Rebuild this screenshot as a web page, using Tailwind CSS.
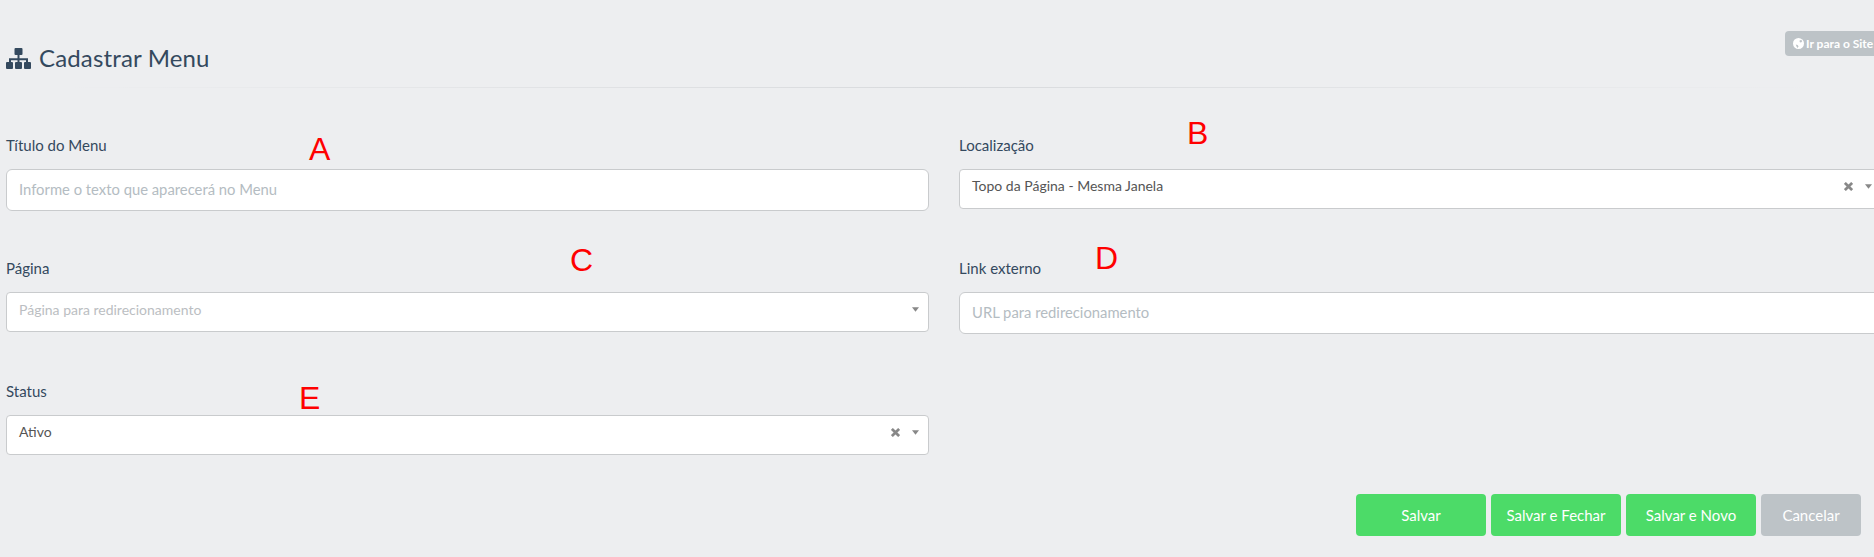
<!DOCTYPE html>
<html lang="pt-BR">
<head>
    <meta charset="UTF-8">
    <title>Cadastrar Menu</title>
    <script src="https://cdn.jsdelivr.net/npm/@tailwindcss/browser@4"></script>
</head>
<body class="bg-[#edeef0] font-['Lato',sans-serif] text-[#34495e] h-[557px] w-[1874px] overflow-hidden relative">

    <!-- header -->
    <div class="relative h-[88px] pl-[6px] pt-[44px]">
        <h1 class="flex items-center gap-[8px] text-[24px] leading-[28px] font-normal tracking-[0.15px]">
            <svg class="w-[25px] h-[21px] fill-[#34495e]" viewBox="0 0 25 21">
                <rect x="8.5" y="0" width="8" height="7" rx="1"/>
                <rect x="0" y="14" width="7" height="7" rx="1"/>
                <rect x="9" y="14" width="7" height="7" rx="1"/>
                <rect x="18" y="14" width="7" height="7" rx="1"/>
                <path d="M11.5 7h2v3.2h8.5v4.3h-2v-2.3h-6.500v2.300h-2v-2.300h-6.500v2.300h-2v-4.300h8.500z"/>
            </svg>
            Cadastrar Menu
        </h1>
        <a class="absolute left-[1785px] top-[31px] w-[100px] h-[25px] rounded-[4px] bg-[#bdc3c7] text-white text-[12px] font-bold flex items-center pl-[8px] gap-[2px]">
            <svg class="w-[11px] h-[11px] fill-white" viewBox="0 0 12 12">
                <path d="M6 0a6 6 0 1 0 0 12A6 6 0 0 0 6 0zm3 1.800 1 1.700-1.200 1.500-1.300-.5-.5-1.500zM3 7l2 .5 1 1.500-.8 2L4 9.500z" fill-rule="evenodd"/>
            </svg>
            Ir para o Site
        </a>
        <div class="absolute left-[60px] top-[87px] w-[1760px] h-px bg-linear-to-r from-transparent via-[#d8dadd] to-transparent"></div>
    </div>

    <!-- form -->
    <div class="grid grid-cols-[923px_923px] gap-x-[30px] pl-[6px] pt-[47px]">
        <div class="h-[123px]">
            <label class="block text-[15px] leading-[20px] mb-[14px]">Título do Menu</label>
            <input class="block w-full h-[42px] bg-white border border-[#c9cbcd] rounded-[6px] px-[12px] pb-[2px] text-[14.800px] placeholder:text-[#b4bcc2] outline-none" placeholder="Informe o texto que aparecerá no Menu">
        </div>
        <div class="h-[123px]">
            <label class="block text-[15px] leading-[20px] mb-[14px]">Localização</label>
            <div class="flex items-center h-[40px] bg-white border border-[#c9cbcd] rounded-[4px] pl-[12px] pr-[9px] pb-[6px] text-[14px] text-[#555]">
                <span class="flex-1 mb-[2px]">Topo da Página - Mesma Janela</span>
                <svg class="w-[9px] h-[9px] stroke-[#888] stroke-[3] mr-[12px]" viewBox="0 0 10 10"><path d="M1 1l8 8M9 1l-8 8"/></svg>
                <svg class="w-[7px] h-[5px] fill-[#888]" viewBox="0 0 8 5"><path d="M0 0h8L4 5z"/></svg>
            </div>
        </div>
        <div class="h-[123px]">
            <label class="block text-[15px] leading-[20px] mb-[14px]">Página</label>
            <div class="flex items-center h-[40px] bg-white border border-[#c9cbcd] rounded-[4px] pl-[12px] pr-[9px] pb-[6px] text-[14px] text-[#bbbec2]">
                <span class="flex-1">Página para redirecionamento</span>
                <svg class="w-[7px] h-[5px] fill-[#888]" viewBox="0 0 8 5"><path d="M0 0h8L4 5z"/></svg>
            </div>
        </div>
        <div class="h-[123px]">
            <label class="block text-[15px] leading-[20px] mb-[14px]">Link externo</label>
            <input class="block w-full h-[42px] bg-white border border-[#c9cbcd] rounded-[6px] px-[12px] pb-[2px] text-[14.800px] placeholder:text-[#b4bcc2] outline-none" placeholder="URL para redirecionamento">
        </div>
        <div class="h-[123px]">
            <label class="block text-[15px] leading-[20px] mb-[14px]">Status</label>
            <div class="flex items-center h-[40px] bg-white border border-[#c9cbcd] rounded-[4px] pl-[12px] pr-[9px] pb-[6px] text-[14px] text-[#555]">
                <span class="flex-1 mb-[2px]">Ativo</span>
                <svg class="w-[9px] h-[9px] stroke-[#888] stroke-[3] mr-[12px]" viewBox="0 0 10 10"><path d="M1 1l8 8M9 1l-8 8"/></svg>
                <svg class="w-[7px] h-[5px] fill-[#888]" viewBox="0 0 8 5"><path d="M0 0h8L4 5z"/></svg>
            </div>
        </div>
    </div>

    <!-- buttons -->
    <div class="flex justify-end gap-[5px] pr-[13px] mt-[-10px] text-white text-[15px]">
        <button class="w-[130px] h-[42px] rounded-[4px] bg-[#4cdb68]">Salvar</button>
        <button class="w-[130px] h-[42px] rounded-[4px] bg-[#4cdb68]">Salvar e Fechar</button>
        <button class="w-[130px] h-[42px] rounded-[4px] bg-[#4cdb68]">Salvar e Novo</button>
        <button class="w-[100px] h-[42px] rounded-[4px] bg-[#bdc3c7]">Cancelar</button>
    </div>

    <!-- annotation letters over the form -->
    <span class="absolute left-[309px] top-[132px] text-[#ff0000] text-[32px] leading-[34px] font-['Liberation_Sans',sans-serif]">A</span>
    <span class="absolute left-[1187px] top-[116px] text-[#ff0000] text-[32px] leading-[34px] font-['Liberation_Sans',sans-serif]">B</span>
    <span class="absolute left-[570px] top-[243px] text-[#ff0000] text-[32px] leading-[34px] font-['Liberation_Sans',sans-serif]">C</span>
    <span class="absolute left-[1095px] top-[241px] text-[#ff0000] text-[32px] leading-[34px] font-['Liberation_Sans',sans-serif]">D</span>
    <span class="absolute left-[299px] top-[381px] text-[#ff0000] text-[32px] leading-[34px] font-['Liberation_Sans',sans-serif]">E</span>
</body>
</html>
